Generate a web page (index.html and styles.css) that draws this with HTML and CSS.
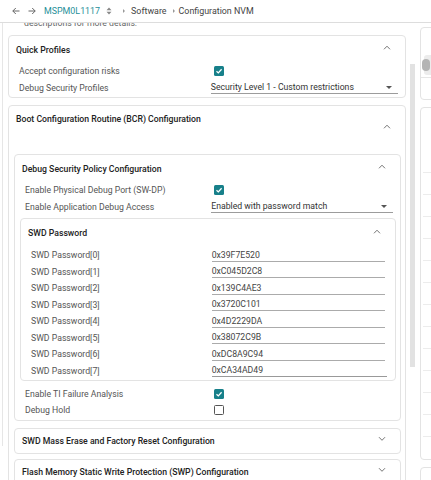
FILE: index.html
```html
<!DOCTYPE html>
<html lang="en">
<head>
    <meta charset="UTF-8">
    <meta name="viewport" content="width=device-width, initial-scale=1.0">
    <title>Configuration NVM</title>
    <link rel="stylesheet" href="styles.css">
</head>
<body>
    <div class="topBar">
        <svg class="navIcon" viewBox="0 0 8 8"><path d="M7.5 4H0.8M3.8 1L0.8 4L3.8 7"/></svg>
        <svg class="navIcon" viewBox="0 0 8 8"><path d="M0.5 4H7.2M4.2 1L7.2 4L4.2 7"/></svg>
        <span class="crumbLink">MSPM0L1117</span>
        <svg class="upDown" viewBox="0 0 6 8"><path d="M0.5 3.2L3 0.6L5.5 3.2Z M0.5 4.8L3 7.4L5.5 4.8Z"/></svg>
        <span class="crumbSep"></span>
        <span class="crumb">Software</span>
        <span class="crumbSep"></span>
        <span class="crumb">Configuration NVM</span>
    </div>
    <div class="workArea">
        <div class="paneEdge"></div>
        <div class="mainPane">
            <div class="clipped"><div class="clippedText">descriptions for more details.</div></div>

            <div class="card firstCard">
                <div class="cardHead headQuick">
                    <span class="cardTitle">Quick Profiles</span>
                    <svg class="chevron" viewBox="0 0 8 5"><path d="M1 4.3L4 1.2L7 4.3"/></svg>
                </div>
                <div class="fieldRow">
                    <span class="fieldLabel">Accept configuration risks</span>
                    <span class="checkBox"><svg viewBox="0 0 8 8"><path d="M1.5 4.2L3.3 5.9L6.6 2.3"/></svg></span>
                </div>
                <div class="fieldRow">
                    <span class="fieldLabel">Debug Security Profiles</span>
                    <span class="selectField">Security Level 1 - Custom restrictions<span class="selectCaret"></span></span>
                </div>
                <div class="cardFoot thin"></div>
            </div>

            <div class="card">
                <div class="cardHead headTall">
                    <span class="cardTitle">Boot Configuration Routine (BCR) Configuration</span>
                    <svg class="chevron" viewBox="0 0 8 5"><path d="M1 4.3L4 1.2L7 4.3"/></svg>
                </div>

                <div class="card">
                    <div class="cardHead headDebug">
                        <span class="cardTitle">Debug Security Policy Configuration</span>
                        <svg class="chevron" viewBox="0 0 8 5"><path d="M1 4.3L4 1.2L7 4.3"/></svg>
                    </div>
                    <div class="fieldRow">
                        <span class="fieldLabel">Enable Physical Debug Port (SW-DP)</span>
                        <span class="checkBox"><svg viewBox="0 0 8 8"><path d="M1.5 4.2L3.3 5.9L6.6 2.3"/></svg></span>
                    </div>
                    <div class="fieldRow">
                        <span class="fieldLabel">Enable Application Debug Access</span>
                        <span class="selectField">Enabled with password match<span class="selectCaret"></span></span>
                    </div>

                    <div class="card swdCard">
                        <div class="cardHead headSwd">
                            <span class="cardTitle">SWD Password</span>
                            <svg class="chevron" viewBox="0 0 8 5"><path d="M1 4.3L4 1.2L7 4.3"/></svg>
                        </div>
                        <div class="fieldRow">
                            <span class="fieldLabel">SWD Password[0]</span>
                            <span class="textField">0x39F7E520</span>
                        </div>
                        <div class="fieldRow">
                            <span class="fieldLabel">SWD Password[1]</span>
                            <span class="textField">0xC045D2C8</span>
                        </div>
                        <div class="fieldRow">
                            <span class="fieldLabel">SWD Password[2]</span>
                            <span class="textField">0x139C4AE3</span>
                        </div>
                        <div class="fieldRow">
                            <span class="fieldLabel">SWD Password[3]</span>
                            <span class="textField">0x3720C101</span>
                        </div>
                        <div class="fieldRow">
                            <span class="fieldLabel">SWD Password[4]</span>
                            <span class="textField">0x4D2229DA</span>
                        </div>
                        <div class="fieldRow">
                            <span class="fieldLabel">SWD Password[5]</span>
                            <span class="textField">0x38072C9B</span>
                        </div>
                        <div class="fieldRow">
                            <span class="fieldLabel">SWD Password[6]</span>
                            <span class="textField">0xDC8A9C94</span>
                        </div>
                        <div class="fieldRow">
                            <span class="fieldLabel">SWD Password[7]</span>
                            <span class="textField hovered">0xCA34AD49</span>
                        </div>
                        <div class="cardFoot thin"></div>
                    </div>

                    <div class="fieldRow afterCard">
                        <span class="fieldLabel">Enable TI Failure Analysis</span>
                        <span class="checkBox"><svg viewBox="0 0 8 8"><path d="M1.5 4.2L3.3 5.9L6.6 2.3"/></svg></span>
                    </div>
                    <div class="fieldRow">
                        <span class="fieldLabel">Debug Hold</span>
                        <span class="checkBox off"></span>
                    </div>
                    <div class="cardFoot thin"></div>
                </div>

                <div class="card collapsed">
                    <div class="cardHead">
                        <span class="cardTitle">SWD Mass Erase and Factory Reset Configuration</span>
                        <svg class="chevron" viewBox="0 0 8 5"><path d="M1 1.2L4 4.3L7 1.2"/></svg>
                    </div>
                </div>

                <div class="card collapsed">
                    <div class="cardHead">
                        <span class="cardTitle">Flash Memory Static Write Protection (SWP) Configuration</span>
                        <svg class="chevron" viewBox="0 0 8 5"><path d="M1 1.2L4 4.3L7 1.2"/></svg>
                    </div>
                </div>
            </div>
        </div>
        <div class="scrollTrack"><div class="scrollThumb"></div></div>
        <div class="sidePane">
            <div class="sideCard firstSide">
                <div class="sideSpacer"></div>
                <div class="sidePill"><span class="pillDot"></span></div>
                <div class="sideDivider"></div>
            </div>
            <div class="sideCard listSide">
                <div class="listTop"></div>
                <div class="listRow"></div>
                <div class="listRow"></div>
                <div class="listRow"></div>
                <div class="listRow"></div>
                <div class="listRow"></div>
                <div class="listRow"></div>
                <div class="listRow"></div>
                <div class="listRow"></div>
                <div class="listRow"></div>
                <div class="listRow"></div>
                <div class="listRow"></div>
                <div class="listRow"></div>
                <div class="listRow"></div>
            </div>
            <div class="sideCard lastSide"></div>
        </div>
    </div>
</body>
</html>
```

FILE: styles.css
```css
html, body {
    margin: 0;
    padding: 0;
}
body {
    font-family: Roboto, "Liberation Sans", sans-serif;
    font-size: 8.7px;
    color: #555;
    background: #fff;
    width: 431px;
    height: 480px;
    overflow: hidden;
}

/* top breadcrumb bar */
.topBar {
    height: 23px;
    box-sizing: border-box;
    border-bottom: 1px solid #dddddd;
    display: flex;
    align-items: center;
    padding-left: 12px;
}
.navIcon {
    width: 8px;
    height: 8px;
    margin-right: 8px;
    fill: none;
    stroke: #666;
    stroke-width: 1;
}
.crumbLink {
    color: #26909a;
    font-size: 8.9px;
}
.upDown {
    width: 6px;
    height: 8px;
    margin-left: 6px;
    fill: #888;
}
.crumbSep {
    width: 0;
    height: 0;
    border-top: 2.5px solid transparent;
    border-bottom: 2.5px solid transparent;
    border-left: 2.5px solid #999;
    margin: 0 6px 0 11px;
}
.crumb {
    color: #444;
    font-size: 8.9px;
}
.crumb + .crumbSep {
    margin-left: 6px;
    margin-right: 4px;
}

/* main layout */
.workArea {
    display: flex;
    align-items: flex-start;
}
.paneEdge {
    width: 1px;
    height: 423px;
    margin-left: 2px;
    background: #e6e6e6;
    flex-shrink: 0;
}
.mainPane {
    width: 403px;
    flex-shrink: 0;
    padding-left: 5px;
    box-sizing: border-box;
}
.clipped {
    height: 7px;
    overflow: hidden;
    padding-left: 16px;
}
.clippedText {
    margin-top: -6px;
    line-height: 12px;
    color: #666;
}

/* cards */
.card {
    border: 1px solid #e3e3e3;
    border-radius: 4px;
    background: #fff;
    margin-top: 7px;
}
.card.firstCard {
    margin-top: 5px;
}
.card .card {
    margin: 4px 4px 0 5px;
}
.card .swdCard {
    margin-top: 3px;
}
.card .collapsed {
    margin-top: 7px;
}
.card .collapsed + .collapsed {
    margin-top: 5px;
}
.cardHead {
    display: flex;
    align-items: center;
    justify-content: space-between;
    height: 24px;
    padding: 0 14px 0 7px;
}
.headQuick {
    height: 27px;
}
.headDebug {
    height: 27px;
}
.headSwd {
    height: 28px;
}
.headTall {
    height: 44px;
}
.headTall .cardTitle {
    align-self: flex-start;
    margin-top: 7px;
}
.cardTitle {
    font-weight: 500;
    color: #222;
    line-height: 12px;
    white-space: nowrap;
}
.chevron {
    width: 8px;
    height: 5px;
    margin-bottom: 4px;
    fill: none;
    stroke: #666;
    stroke-width: 0.9;
}
.cardFoot {
    height: 2px;
}
.cardFoot.thin {
    height: 1px;
}

/* form rows */
.fieldRow {
    display: grid;
    grid-template-columns: 50.6% 1fr;
    align-items: center;
    height: 16.5px;
    padding: 0 7px 0 10px;
}
.fieldRow.afterCard {
    margin-top: 4.5px;
}
.fieldLabel {
    color: #555;
    white-space: nowrap;
}
.checkBox {
    width: 10px;
    height: 10px;
    margin-left: 3px;
    border-radius: 1.5px;
    background: #17808a;
    display: flex;
    align-items: center;
    justify-content: center;
    box-sizing: border-box;
}
.checkBox svg {
    width: 8px;
    height: 8px;
    fill: none;
    stroke: #fff;
    stroke-width: 1.3;
}
.checkBox.off {
    background: #fff;
    border: 1.3px solid #555;
}
.selectField {
    display: flex;
    align-items: center;
    justify-content: space-between;
    line-height: 12px;
    padding-right: 6px;
    border-bottom: 1px solid #9c9c9c;
    color: #333;
    white-space: nowrap;
}
.selectCaret {
    width: 0;
    height: 0;
    border-left: 3px solid transparent;
    border-right: 3px solid transparent;
    border-top: 3px solid #555;
}
.textField {
    line-height: 12px;
    border-bottom: 1px solid #ababab;
    color: #444;
    margin-right: 3px;
}
.textField.hovered {
    margin-right: 1px;
    border-bottom-color: #999;
}

/* scrollbar */
.scrollTrack {
    width: 13px;
    flex-shrink: 0;
}
.scrollThumb {
    width: 5px;
    height: 303px;
    margin: 41px 0 0 4px;
    background: #e2e2e2;
}

/* right side panel */
.sidePane {
    flex: 1;
    overflow: hidden;
}
.sideCard {
    border: 1px solid #e3e3e3;
    border-radius: 4px;
    margin-left: 1px;
    width: 30px;
    box-sizing: border-box;
}
.firstSide {
    margin-top: 4px;
    height: 73px;
}
.sideSpacer {
    height: 27px;
}
.sidePill {
    height: 20px;
    margin-left: 3px;
    background: #ececec;
    border-radius: 3px;
    display: flex;
    align-items: center;
}
.pillDot {
    width: 8px;
    height: 12px;
    border-radius: 6px;
    background: #b4b4b4;
    margin-left: -2px;
}
.sideDivider {
    height: 1px;
    margin-top: 2px;
    background: #e6e6e6;
}
.listSide {
    margin-top: 7px;
    height: 353px;
}
.listTop {
    height: 64px;
}
.listRow {
    height: 21px;
    border-top: 1px solid #ececec;
    margin-left: 2px;
}
.lastSide {
    margin-top: 7px;
    height: 40px;
}
```
